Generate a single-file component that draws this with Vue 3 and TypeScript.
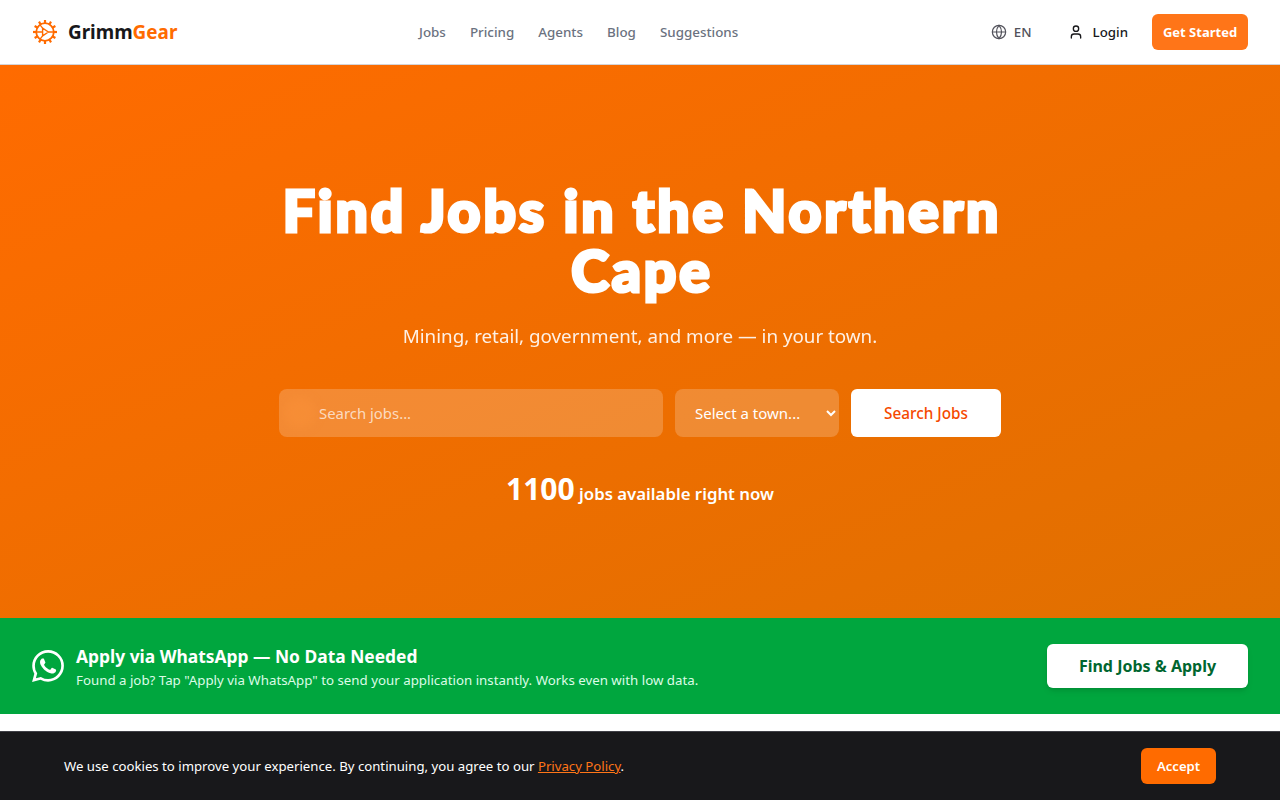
<script setup lang="ts">
const navLinks = ['Jobs', 'Pricing', 'Agents', 'Blog', 'Suggestions']
const teeth = Array.from({ length: 12 }, (_, i) => i * 30)
</script>

<template>
  <div class="page">
    <header class="topbar">
      <a class="logo">
        <svg class="logo-icon" viewBox="0 0 26 26" fill="none" stroke="#ff6b00">
          <circle cx="13" cy="13" r="8.8" stroke-width="1.8" />
          <line
            v-for="t in teeth"
            :key="t"
            x1="13"
            y1="4.6"
            x2="13"
            y2="1"
            stroke-width="2.2"
            :transform="`rotate(${t} 13 13)`"
          />
          <path d="M10.6 9.2 L16.4 13 L10.6 16.8 Z" stroke-width="1.4" stroke-linejoin="round" />
          <path d="M4.5 13 H10.6 M10.6 9.2 L8 5.8 M10.6 16.8 L8 20.2 M16.4 13 H21.5" stroke-width="1.3" />
        </svg>
        <span class="logo-text">Grimm<span class="logo-accent">Gear</span></span>
      </a>
      <nav class="nav">
        <a v-for="link in navLinks" :key="link" class="nav-link">{{ link }}</a>
      </nav>
      <div class="actions">
        <button class="lang">
          <svg viewBox="0 0 24 24" class="ic" fill="none" stroke="currentColor" stroke-width="1.8">
            <circle cx="12" cy="12" r="10" />
            <path d="M2 12h20M12 2a15 15 0 0 1 0 20a15 15 0 0 1 0-20z" />
          </svg>
          EN
        </button>
        <button class="login">
          <svg viewBox="0 0 24 24" class="ic" fill="none" stroke="currentColor" stroke-width="2" stroke-linecap="round">
            <circle cx="12" cy="7" r="4" />
            <path d="M19 21v-2a4 4 0 0 0-4-4H9a4 4 0 0 0-4 4v2" />
          </svg>
          Login
        </button>
        <button class="cta">Get Started</button>
      </div>
    </header>

    <section class="hero">
      <h1>Find Jobs in the Northern Cape</h1>
      <p class="sub">Mining, retail, government, and more — in your town.</p>
      <form class="search" @submit.prevent>
        <div class="search-input">
          <span class="blob"></span>
          <input type="text" placeholder="Search jobs..." />
        </div>
        <select class="town">
          <option>Select a town...</option>
        </select>
        <button class="search-btn">Search Jobs</button>
      </form>
      <p class="count"><strong>1100</strong> jobs available right now</p>
    </section>

    <section class="wa">
      <div class="wa-left">
        <svg class="wa-icon" viewBox="0 0 24 24" fill="#fff">
          <path d="M17.472 14.382c-.297-.149-1.758-.867-2.03-.967-.273-.099-.471-.148-.67.15-.197.297-.767.966-.94 1.164-.173.199-.347.223-.644.075-.297-.15-1.255-.463-2.39-1.475-.883-.788-1.48-1.761-1.653-2.059-.173-.297-.018-.458.13-.606.134-.133.298-.347.446-.52.149-.174.198-.298.298-.497.099-.198.05-.371-.025-.52-.075-.149-.669-1.612-.916-2.207-.242-.579-.487-.5-.669-.51-.173-.008-.371-.01-.57-.01-.198 0-.52.074-.792.372-.272.297-1.04 1.016-1.04 2.479 0 1.462 1.065 2.875 1.213 3.074.149.198 2.096 3.2 5.077 4.487.709.306 1.262.489 1.694.625.712.227 1.36.195 1.871.118.571-.085 1.758-.719 2.006-1.413.248-.694.248-1.289.173-1.413-.074-.124-.272-.198-.57-.347m-5.421 7.403h-.004a9.87 9.87 0 0 1-5.031-1.378l-.361-.214-3.741.982.998-3.648-.235-.374a9.86 9.86 0 0 1-1.51-5.26c.001-5.45 4.436-9.884 9.888-9.884 2.64 0 5.122 1.03 6.988 2.898a9.825 9.825 0 0 1 2.893 6.994c-.003 5.45-4.437 9.884-9.885 9.884m8.413-18.297A11.815 11.815 0 0 0 12.05 0C5.495 0 .16 5.335.157 11.892c0 2.096.547 4.142 1.588 5.945L.057 24l6.305-1.654a11.882 11.882 0 0 0 5.683 1.448h.005c6.554 0 11.89-5.335 11.893-11.893a11.821 11.821 0 0 0-3.48-8.413z" />
        </svg>
        <div>
          <h2>Apply via WhatsApp — No Data Needed</h2>
          <p>Found a job? Tap "Apply via WhatsApp" to send your application instantly. Works even with low data.</p>
        </div>
      </div>
      <button class="wa-btn">Find Jobs &amp; Apply</button>
    </section>

    <div class="below"></div>

    <div class="cookie">
      <p>We use cookies to improve your experience. By continuing, you agree to our <a>Privacy Policy</a>.</p>
      <button class="accept">Accept</button>
    </div>
  </div>
</template>

<style scoped>
.page {
  font-family: "Noto Sans", "Open Sans", sans-serif;
  height: 800px;
  overflow: hidden;
  background: #fff;
}

button {
  font-family: inherit;
  border: none;
  background: none;
  padding: 0;
  cursor: pointer;
}

.topbar {
  height: 64px;
  padding: 0 32px;
  display: flex;
  align-items: center;
  background: #fff;
  border-bottom: 1px solid #d4d4d8;
}

.logo {
  display: flex;
  align-items: center;
  gap: 10px;
  width: 387px;
}

.logo-icon {
  width: 26px;
  height: 26px;
}

.logo-text {
  font-size: 18.9px;
  font-weight: 700;
  color: #18181b;
}

.logo-accent {
  color: #ff6b00;
}

.nav {
  display: flex;
  gap: 24px;
}

.nav-link {
  font-size: 13.4px;
  font-weight: 500;
  color: #6b7280;
}

.actions {
  display: flex;
  align-items: center;
  margin-left: auto;
}

.ic {
  width: 16px;
  height: 16px;
}

.lang,
.login {
  display: flex;
  align-items: center;
  font-size: 13.3px;
  font-weight: 500;
}

.lang {
  gap: 7px;
  color: #52525b;
  margin-right: 36px;
}

.login {
  gap: 9px;
  color: #18181b;
  margin-right: 24px;
}

.cta {
  height: 36px;
  width: 96px;
  border-radius: 6px;
  background: #ff7518;
  color: #fff;
  font-size: 13px;
  font-weight: 700;
}

.hero {
  height: 553px;
  box-sizing: border-box;
  padding-top: 115px;
  display: flex;
  flex-direction: column;
  align-items: center;
  background: linear-gradient(to bottom right, #ff6b00, #e07000);
  color: #fff;
}

h1 {
  margin: 0;
  width: 768px;
  padding-left: 4px;
  box-sizing: border-box;
  font-family: Lato, "Noto Sans", sans-serif;
  font-size: 57px;
  font-weight: 900;
  line-height: 60px;
  letter-spacing: 2.9px;
  -webkit-text-stroke: 3.2px #fff;
  text-align: center;
}

.sub {
  margin: 22px 0 0;
  font-size: 18.8px;
  line-height: 28px;
  opacity: .9;
}

.search {
  margin-top: 39px;
  display: flex;
  gap: 12px;
}

.search-input {
  position: relative;
  width: 384px;
  height: 48px;
  border-radius: 8px;
  background: rgba(255, 255, 255, .2);
}

.blob {
  position: absolute;
  left: 5px;
  top: 8px;
  width: 32px;
  height: 32px;
  border-radius: 50%;
  background: rgba(255, 150, 60, .3);
  filter: blur(5px);
}

.search-input input {
  position: relative;
  width: 100%;
  height: 100%;
  box-sizing: border-box;
  padding: 0 16px 0 40px;
  border: none;
  background: transparent;
  outline: none;
  color: #fff;
  font-family: inherit;
  font-size: 14.9px;
}

.search-input input::placeholder {
  color: rgba(255, 255, 255, .7);
}

.town {
  width: 164px;
  height: 48px;
  padding: 0 4px 0 16px;
  border: none;
  border-radius: 8px;
  background: rgba(255, 255, 255, .2);
  color: #fff;
  font-family: inherit;
  font-size: 15px;
}

.search-btn {
  width: 150px;
  height: 48px;
  border-radius: 6px;
  background: #fff;
  color: #f54900;
  font-size: 15.3px;
  font-weight: 500;
}

.count {
  margin: 32px 0 0;
  font-size: 16.8px;
  font-weight: 600;
  line-height: 40px;
}

.count strong {
  font-size: 30px;
  font-weight: 700;
}

.wa {
  height: 96px;
  box-sizing: border-box;
  padding: 0 32px;
  display: flex;
  align-items: center;
  justify-content: space-between;
  background: #00a63e;
  color: #fff;
}

.wa-left {
  display: flex;
  align-items: center;
  gap: 12px;
}

.wa-icon {
  width: 32px;
  height: 32px;
}

h2 {
  margin: 0;
  font-size: 17.4px;
  line-height: 28px;
  font-weight: 700;
}

.wa p {
  margin: 0;
  font-size: 13.3px;
  line-height: 20px;
  color: #dcfce7;
}

.wa-btn {
  width: 201px;
  height: 44px;
  border-radius: 6px;
  background: #fff;
  color: #016630;
  font-size: 16px;
  font-weight: 700;
  box-shadow: 0 4px 6px -1px rgba(0, 0, 0, .1), 0 2px 4px -2px rgba(0, 0, 0, .1);
}

.cookie {
  position: fixed;
  left: 0;
  right: 0;
  bottom: 0;
  height: 69px;
  box-sizing: border-box;
  padding: 0 64px;
  display: flex;
  align-items: center;
  justify-content: space-between;
  background: #18181b;
  border-top: 1px solid #3f3f46;
  color: #fff;
}

.cookie p {
  margin: 0;
  font-size: 13.2px;
}

.cookie a {
  color: #ff7518;
  text-decoration: underline;
}

.accept {
  width: 75px;
  height: 36px;
  border-radius: 6px;
  background: #ff6b00;
  color: #fff;
  font-size: 13.1px;
  font-weight: 600;
}
</style>

<style>
html,
body {
  margin: 0;
  background: #fff;
}
</style>
